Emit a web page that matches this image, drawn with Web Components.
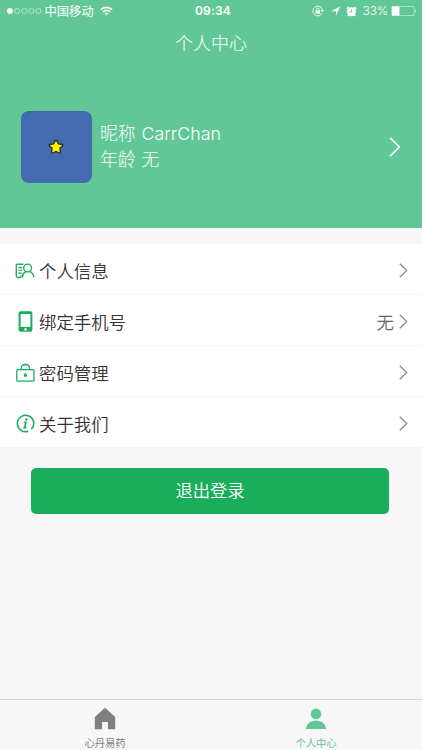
<!DOCTYPE html>
<html lang="zh-CN">
<head>
<meta charset="utf-8">
<meta name="viewport" content="width=device-width, initial-scale=1">
<title>个人中心</title>
<style>
  body {
    margin: 0;
    overflow: hidden;
    font-family: Inter, "Noto Sans CJK SC", sans-serif;
  }
</style>
</head>
<body>
<profile-page></profile-page>

<script>
class BaseElement extends HTMLElement {
  constructor() {
    super();
    this.attachShadow({ mode: "open" });
  }

  connectedCallback() {
    this.shadowRoot.innerHTML = `<style>${this.constructor.styles}</style>${this.template()}`;
  }
}

class StatusBar extends BaseElement {
  static get styles() {
    return /*css*/ `
      :host {
        display: grid;
        grid-template-columns: 1fr auto 1fr;
        align-items: center;
        height: 22px;
        padding: 0 5px 0 7px;
        font-size: 12.3px;
        line-height: 22px;
      }
      svg { display: block; flex: none; }
      .left, .right { display: flex; align-items: center; }
      .right { justify-content: flex-end; }
      .carrier { margin: 0 6px 0 2.5px; padding-top: 1px; line-height: 21px; }
      .time { padding-left: 2px; font-weight: 600; font-size: 12px; letter-spacing: 0.2px; }
      .percent { margin: 0 3px 0 6px; font-size: 12px; font-weight: 300; letter-spacing: -0.1px; }
      .location { margin: 0 6px 0 7px; }
    `;
  }

  template() {
    return /*html*/ `
      <div class="left">
        <svg width="35" height="8" viewBox="0 0 35 8" fill="none" stroke="#fff" stroke-width=".5">
          <circle cx="2.9" cy="4" r="2.7" fill="#fff"/>
          <circle cx="10.1" cy="4" r="2.6"/><circle cx="17.2" cy="4" r="2.6"/>
          <circle cx="24.3" cy="4" r="2.6"/><circle cx="31.4" cy="4" r="2.6"/>
        </svg>
        <span class="carrier">中国移动</span>
        <svg width="13" height="10" viewBox="0 0 14 10" fill="none" stroke="#fff" stroke-width="1.8">
          <path d="M1 3.6a8.4 8.4 0 0 1 12 0M3.2 5.9a5.3 5.3 0 0 1 7.6 0"/>
          <path d="M7 9.7 4.9 7.6a3 3 0 0 1 4.2 0z" fill="#fff" stroke="none"/>
        </svg>
      </div>
      <span class="time">09:34</span>
      <div class="right">
        <svg width="12" height="12" viewBox="0 0 12 12" fill="none" stroke="#fff" stroke-width=".8">
          <path d="M10.3 7.8A4.9 4.9 0 1 1 10.5 5"/>
          <path d="M8.9 4.9h3l-1.5 2.2z" fill="#fff" stroke="none"/>
          <path d="M3.5 5.4h4.6v3.3H3.5z" fill="#fff" stroke="none"/>
          <path d="M4.4 5.6V4.4a1.4 1.4 0 0 1 2.8 0v1.2"/>
        </svg>
        <svg class="location" width="9" height="10" viewBox="0 0 9 10">
          <path d="M9 .4 5.2 9.6V5.2H.2z" fill="#fff"/>
        </svg>
        <svg width="11" height="11" viewBox="0 0 11 11">
          <circle cx="5.5" cy="5.8" r="4.5" fill="#fff"/>
          <path d="M.7 2.8 2.8.9M10.3 2.8 8.2.9M2.6 9 1.7 10M8.4 9l.9 1" stroke="#fff" stroke-width="1.4"/>
          <path d="M5.5 3.3v2.8H3.8" stroke="#62c797" stroke-width=".9" fill="none"/>
        </svg>
        <span class="percent">33%</span>
        <svg width="26" height="10" viewBox="0 0 26 10">
          <rect x=".9" y=".4" width="22.2" height="9.2" rx="1" fill="none" stroke="#fff" stroke-width=".5"/>
          <path d="M1 .5H8.5v9H1z" fill="#fff"/>
          <path d="M24 3.3q1.6 1.7 0 3.4z" fill="#fff"/>
        </svg>
      </div>
    `;
  }
}

class ChevronIcon extends BaseElement {
  static get styles() {
    return /*css*/ `
      :host { display: block; width: 9px; height: 15px; }
      svg { display: block; width: 100%; height: 100%; overflow: visible; }
    `;
  }

  template() {
    return /*html*/ `
      <svg viewBox="0 0 9 15" fill="none" stroke="currentColor" stroke-width="1.2">
        <path d="m.8.7 7 6.8-7 6.8"/>
      </svg>
    `;
  }
}

class ProfileHeader extends BaseElement {
  static get styles() {
    return /*css*/ `
      :host {
        display: block;
        height: 228px;
        background: #62c797;
        color: #fff;
      }
      h1 {
        margin: 0;
        height: 44px;
        font-size: 18px;
        font-weight: 300;
        line-height: 44px;
        text-align: center;
      }
      .user {
        display: flex;
        align-items: center;
        height: 72px;
        margin-top: 45px;
        padding: 0 21.5px 0 20.5px;
      }
      .avatar {
        display: grid;
        place-content: center;
        width: 71.5px;
        height: 72px;
        border-radius: 8px;
        background: #446bb0;
      }
      .avatar svg { display: block; }
      .info {
        flex: 1;
        margin-left: 8px;
        font-size: 17.8px;
        font-weight: 300;
        line-height: 26px;
        word-spacing: 1px;
      }
      .info div { height: 26px; white-space: pre; }
      chevron-icon { width: 12px; height: 20px; }
    `;
  }

  template() {
    return /*html*/ `
      <status-bar></status-bar>
      <h1>个人中心</h1>
      <div class="user">
        <div class="avatar">
          <svg width="18" height="18" viewBox="0 0 18 18">
            <path d="M9 2.2q.6 0 .9.7l1.5 3 3.7.5q1.2.3.4 1.3l-2.6 2.7.6 3.8q.1 1.2-1 .8L9 13.5 5.5 15q-1.1.4-1-.8l.6-3.8-2.6-2.7q-.8-1 .4-1.3l3.7-.5 1.5-3q.3-.7.9-.7z"
              fill="#fff200" stroke="#262a2c" stroke-width="1.3" stroke-linejoin="round"/>
          </svg>
        </div>
        <div class="info">
          <div>昵称 CarrChan</div>
          <div>年龄 无</div>
        </div>
        <chevron-icon></chevron-icon>
      </div>
    `;
  }
}

class MenuItem extends BaseElement {
  static get styles() {
    return /*css*/ `
      :host {
        display: flex;
        align-items: center;
        box-sizing: border-box;
        height: 51px;
        padding: 3px 14px 0 15px;
        border-bottom: 1.5px solid #f4f4f4;
        background: #fff;
        color: #333;
        font-size: 17.4px;
        line-height: 26px;
      }
      :host(:last-child) { height: 50px; border-bottom: 0; }
      .icon { display: flex; justify-content: center; width: 20px; margin-right: 4px; color: #18ae5b; }
      .label { flex: 1; padding-top: 2px; font-weight: 350; }
      .value { margin-right: 5px; padding-top: 2px; color: #666; font-weight: 350; }
      chevron-icon { color: #888; }
    `;
  }

  template() {
    return /*html*/ `
      <div class="icon"><slot name="icon"></slot></div>
      <div class="label"><slot></slot></div>
      <div class="value"><slot name="value"></slot></div>
      <chevron-icon></chevron-icon>
    `;
  }
}

class LogoutButton extends BaseElement {
  static get styles() {
    return /*css*/ `
      :host { display: block; padding: 21px 33px 0 31px; }
      button {
        display: block;
        width: 100%;
        height: 45.5px;
        padding: 0;
        border: 0;
        border-radius: 5px;
        background: #18ae5b;
        color: #fff;
        font: inherit;
        font-size: 17.3px;
        font-weight: 350;
        line-height: 46px;
      }
    `;
  }

  template() {
    return /*html*/ `<button type="button"><slot></slot></button>`;
  }
}

class TabItem extends BaseElement {
  static get styles() {
    return /*css*/ `
      :host {
        display: flex;
        flex: 1;
        flex-direction: column;
        align-items: center;
        padding: 7px 1px 0 0;
        color: #808080;
        font-size: 10.3px;
        line-height: 14px;
      }
      :host([active]) { color: #62c797; }
      .label { margin-top: 6px; }
    `;
  }

  template() {
    return /*html*/ `
      <slot name="icon"></slot>
      <div class="label"><slot></slot></div>
    `;
  }
}

class TabBar extends BaseElement {
  static get styles() {
    return /*css*/ `
      :host {
        display: flex;
        box-sizing: border-box;
        height: 51px;
        border-top: 1px solid #d2d2d2;
        background: #f7f7f7;
      }
    `;
  }

  template() {
    return /*html*/ `<slot></slot>`;
  }
}

class ProfilePage extends BaseElement {
  static get styles() {
    return /*css*/ `
      :host {
        display: flex;
        flex-direction: column;
        height: 100vh;
        background: #f7f7f7;
      }
      .menu { margin-top: 16px; }
      .spacer { flex: 1; }
      svg { display: block; }
    `;
  }

  template() {
    return /*html*/ `
      <profile-header></profile-header>
      <div class="menu">
        <menu-item>
          <svg slot="icon" width="20" height="16" viewBox="0 0 19 15.2" fill="none" stroke="currentColor" stroke-width="1.3">
            <path d="M8 1.2H2.4Q1.2 1.2 1.2 2.4v9.8q0 1.6 1.6 1.6h1.5q1.3-.3 2-1.8"/>
            <path d="M3.3 4.3h3.2M3.3 7h3.2M3.3 9.7h2.8"/>
            <circle cx="12" cy="4.8" r="3.7"/>
            <path d="M6.7 13.6q.6-3.8 3.6-5.4M13.8 8q3.5 1.5 4.2 5.6"/>
          </svg>
          个人信息
        </menu-item>
        <menu-item>
          <svg slot="icon" width="15" height="21" viewBox="0 0 15 21">
            <path fill="currentColor" fill-rule="evenodd" d="M2.6.3h9.8q2 0 2 2v16.4q0 2-2 2H2.6q-2 0-2-2V2.3q0-2 2-2zM2.6 3v13h9.8V3zM7.5 17.1a1.3 1.3 0 1 0 .01 0z"/>
          </svg>
          绑定手机号
          <span slot="value">无</span>
        </menu-item>
        <menu-item>
          <svg slot="icon" width="19" height="20" viewBox="0 0 19 20" fill="none" stroke="currentColor" stroke-width="1.3">
            <rect x=".8" y="6.7" width="17.2" height="11.4" rx="1"/>
            <path d="M5.3 6.5V5.3q0-3.6 4.1-3.8 4.1.2 4.1 3.8v1.2"/>
            <ellipse cx="9.4" cy="12.2" rx="1.4" ry="2" fill="currentColor" stroke="none"/>
          </svg>
          密码管理
        </menu-item>
        <menu-item>
          <svg slot="icon" width="19" height="19" viewBox="0 0 19 19" fill="none" stroke="currentColor" stroke-width="1.5">
            <path d="M12.2 17.3A8.2 8.2 0 1 1 15.4 15.3"/>
            <path d="M7.8 8.2h2L8.7 13.6h1.7M7.3 13.6h1.6" stroke-width="1.6"/>
            <circle cx="10.4" cy="5.4" r="1.2" fill="currentColor" stroke="none"/>
          </svg>
          关于我们
        </menu-item>
      </div>
      <logout-button>退出登录</logout-button>
      <div class="spacer"></div>
      <tab-bar>
        <tab-item>
          <svg slot="icon" width="22" height="23" viewBox="0 0 22 23">
            <path fill="currentColor" d="M11 .7.8 10v12.3h7.3V15h5.8v7.3h7.3V10z"/>
          </svg>
          心丹易药
        </tab-item>
        <tab-item active>
          <svg slot="icon" width="22" height="23" viewBox="0 0 22 23" fill="currentColor">
            <circle cx="11" cy="6.9" r="5.3"/>
            <path d="M.8 22.1q1-8.3 10.2-8.6 9.2.3 10.2 8.6z"/>
          </svg>
          个人中心
        </tab-item>
      </tab-bar>
    `;
  }
}

window.customElements.define("status-bar", StatusBar);
window.customElements.define("chevron-icon", ChevronIcon);
window.customElements.define("profile-header", ProfileHeader);
window.customElements.define("menu-item", MenuItem);
window.customElements.define("logout-button", LogoutButton);
window.customElements.define("tab-item", TabItem);
window.customElements.define("tab-bar", TabBar);
window.customElements.define("profile-page", ProfilePage);
</script>
</body>
</html>
